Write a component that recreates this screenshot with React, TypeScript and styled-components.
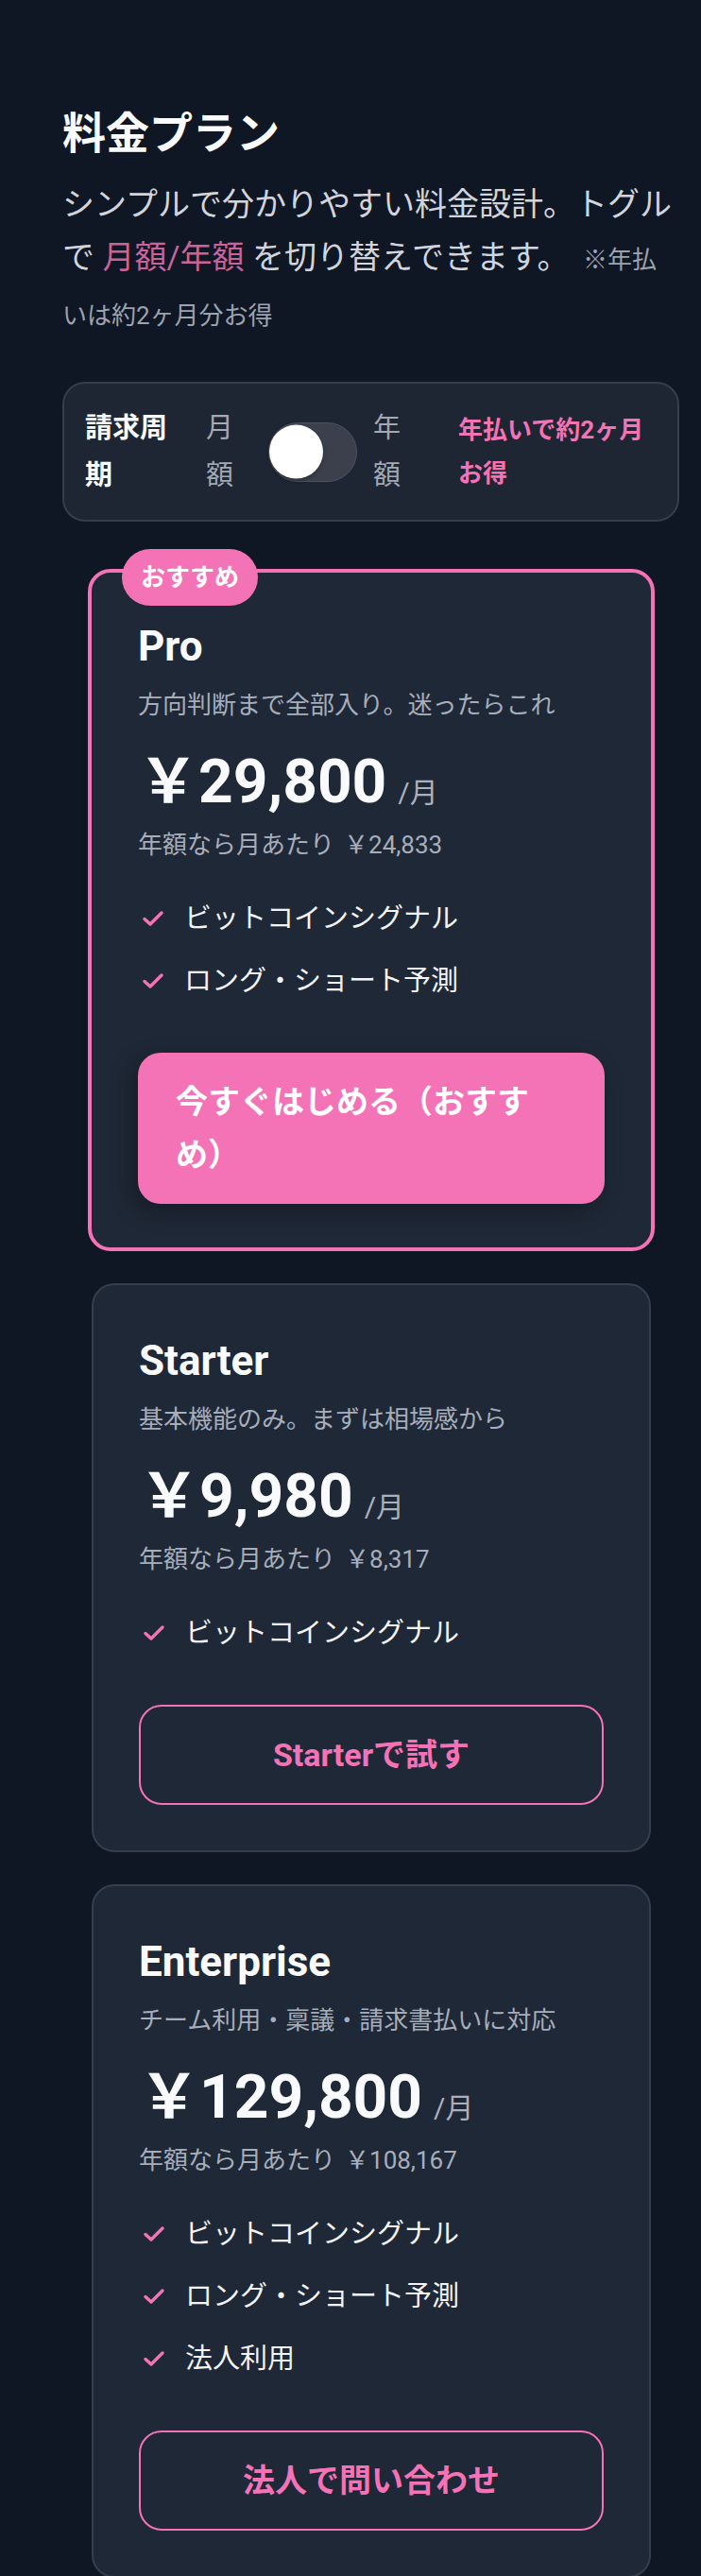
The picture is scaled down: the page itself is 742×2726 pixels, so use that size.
import { useState } from "react";
import styled, { createGlobalStyle } from "styled-components";

const GlobalStyle = createGlobalStyle`
  * {
    box-sizing: border-box;
  }
  html,
  body {
    margin: 0;
    padding: 0;
    background: #0f1624;
  }
  body {
    font-family: Roboto, "Noto Sans CJK JP", "Noto Sans", sans-serif;
    color: #f3f4f6;
  }
`;

const Page = styled.main`
  min-height: 2726px;
  padding: 107px 23px 60px 66px;
  background: #0f1624;
`;

const Title = styled.h1`
  margin: 0;
  font-size: 46px;
  line-height: 68px;
  font-weight: 700;
  color: #f9fafb;
`;

const Lead = styled.p`
  margin: 13px 0 0;
  max-width: 650px;
  font-size: 34px;
  line-height: 56px;
  color: #d1d5db;
`;

const Accent = styled.span`
  color: #c9639c;
`;

const Note = styled.span`
  margin-left: 6px;
  font-size: 26px;
  color: #9ca3af;
`;

const BillingBar = styled.div`
  margin-top: 42px;
  display: grid;
  grid-template-columns: 128px 66px 111px 90px 1fr;
  align-items: center;
  padding: 22px;
  border: 2px solid #353e4d;
  border-radius: 24px;
  background: #1e2634;
`;

const BillingLabel = styled.span`
  max-width: 3.2em;
  font-size: 29px;
  line-height: 50px;
  font-weight: 700;
  color: #f9fafb;
`;

const PeriodText = styled.span`
  max-width: 1.2em;
  font-size: 29px;
  line-height: 50px;
  color: #a3aab6;
`;

const Switch = styled.button`
  position: relative;
  width: 94px;
  height: 63px;
  padding: 0;
  border: 1.5px solid #4b5263;
  border-radius: 999px;
  background: #3b404c;
  cursor: pointer;
`;

const Knob = styled.span<{ $on: boolean }>`
  position: absolute;
  top: 50%;
  left: ${(p) => (p.$on ? "34px" : "0px")};
  width: 57px;
  height: 57px;
  border-radius: 50%;
  background: #ffffff;
  transform: translateY(-50%);
  box-shadow: 0 2px 4px rgba(0, 0, 0, 0.3);
  transition: left 0.2s;
`;

const SaveText = styled.span`
  font-size: 26px;
  line-height: 46px;
  font-weight: 700;
  color: #f472b6;
`;

const Plans = styled.div`
  margin-top: 50px;
  padding: 0 30px 0 31px;
  display: flex;
  flex-direction: column;
  gap: 34px;
`;

const Card = styled.section<{ $featured?: boolean }>`
  position: relative;
  margin: 0 ${(p) => (p.$featured ? "-4px" : "0")};
  padding: ${(p) => (p.$featured ? "46px 49px" : "48px")};
  border: ${(p) => (p.$featured ? "4px solid #f472b6" : "2px solid #353e4d")};
  border-radius: 24px;
  background: #1f2837;
`;

const Badge = styled.span`
  position: absolute;
  top: -25px;
  left: 32px;
  height: 60px;
  padding: 0 20px;
  border-radius: 999px;
  background: #f472b6;
  color: #ffffff;
  font-size: 26px;
  line-height: 60px;
  font-weight: 700;
`;

const PlanName = styled.h2`
  margin: 0;
  font-size: 44px;
  line-height: 64px;
  font-weight: 700;
  color: #f9fafb;
`;

const PlanDesc = styled.p`
  margin: 10px 0 0;
  font-size: 26px;
  line-height: 40px;
  color: #a7aebb;
`;

const PriceRow = styled.div`
  margin-top: 24px;
  display: flex;
  align-items: baseline;
`;

const Amount = styled.span`
  font-size: 64px;
  line-height: 76px;
  font-weight: 700;
  color: #f9fafb;
`;

const Per = styled.span`
  margin-left: 12px;
  font-size: 30px;
  color: #a9b1be;
`;

const Annual = styled.p`
  margin: 8px 0 0;
  font-size: 26px;
  line-height: 40px;
  color: #a7aebb;
`;

const AnnualPrice = styled.span`
  margin-left: 10px;
`;

const Features = styled.ul`
  margin: 35px 0 0;
  padding: 0;
  list-style: none;
  display: flex;
  flex-direction: column;
  gap: 20px;
`;

const Feature = styled.li`
  display: flex;
  align-items: center;
  gap: 21px;
  font-size: 29px;
  line-height: 46px;
  color: #f3f4f6;
`;

const CheckMark = styled.svg`
  flex: none;
  margin-left: 4px;
`;

const ActionButton = styled.button<{ $filled?: boolean }>`
  margin-top: 53px;
  width: 100%;
  display: flex;
  justify-content: center;
  align-items: center;
  text-align: left;
  padding: ${(p) => (p.$filled ? "24px 44px 24px 40px" : "23px 40px")};
  border: ${(p) => (p.$filled ? "none" : "2px solid #f472b6")};
  border-radius: 24px;
  background: ${(p) => (p.$filled ? "#f472b6" : "transparent")};
  color: ${(p) => (p.$filled ? "#ffffff" : "#f472b6")};
  font-family: inherit;
  font-size: 34px;
  line-height: 56px;
  font-weight: 700;
  box-shadow: ${(p) => (p.$filled ? "-6px 8px 24px rgba(0, 0, 0, 0.3)" : "none")};
  cursor: pointer;
`;

interface Plan {
  name: string;
  desc: string;
  monthly: number;
  features: string[];
  cta: string;
  featured?: boolean;
}

const plans: Plan[] = [
  {
    name: "Pro",
    desc: "方向判断まで全部入り。迷ったらこれ",
    monthly: 29800,
    features: ["ビットコインシグナル", "ロング・ショート予測"],
    cta: "今すぐはじめる（おすすめ）",
    featured: true,
  },
  {
    name: "Starter",
    desc: "基本機能のみ。まずは相場感から",
    monthly: 9980,
    features: ["ビットコインシグナル"],
    cta: "Starterで試す",
  },
  {
    name: "Enterprise",
    desc: "チーム利用・稟議・請求書払いに対応",
    monthly: 129800,
    features: ["ビットコインシグナル", "ロング・ショート予測", "法人利用"],
    cta: "法人で問い合わせ",
  },
];

const yen = (n: number) => "￥" + n.toLocaleString("en-US");

// 年額は10ヶ月分 → 月あたり換算
const perMonthYearly = (n: number) => Math.round((n * 10) / 12);

function Check() {
  return (
    <CheckMark width="24" height="18" viewBox="0 0 24 18" aria-hidden>
      <path
        d="M3 9.5l6 5.5L21 3"
        fill="none"
        stroke="#f472b6"
        strokeWidth="3.5"
        strokeLinecap="round"
        strokeLinejoin="round"
      />
    </CheckMark>
  );
}

function PlanCard({ plan, yearly }: { plan: Plan; yearly: boolean }) {
  const price = yearly ? perMonthYearly(plan.monthly) : plan.monthly;
  return (
    <Card $featured={plan.featured}>
      {plan.featured && <Badge>おすすめ</Badge>}
      <PlanName>{plan.name}</PlanName>
      <PlanDesc>{plan.desc}</PlanDesc>
      <PriceRow>
        <Amount>{yen(price)}</Amount>
        <Per>/月</Per>
      </PriceRow>
      <Annual>
        年額なら月あたり
        <AnnualPrice>{yen(perMonthYearly(plan.monthly))}</AnnualPrice>
      </Annual>
      <Features>
        {plan.features.map((f) => (
          <Feature key={f}>
            <Check />
            {f}
          </Feature>
        ))}
      </Features>
      <ActionButton $filled={plan.featured}>
        <span>{plan.cta}</span>
      </ActionButton>
    </Card>
  );
}

export default function App() {
  const [yearly, setYearly] = useState(false);

  return (
    <>
      <GlobalStyle />
      <Page>
        <Title>料金プラン</Title>
        <Lead>
          シンプルで分かりやすい料金設計。トグルで <Accent>月額/年額</Accent>{" "}
          を切り替えできます。 <Note>※年払いは約2ヶ月分お得</Note>
        </Lead>

        <BillingBar>
          <BillingLabel>請求周期</BillingLabel>
          <PeriodText>月額</PeriodText>
          <Switch
            role="switch"
            aria-checked={yearly}
            onClick={() => setYearly(!yearly)}
          >
            <Knob $on={yearly} />
          </Switch>
          <PeriodText>年額</PeriodText>
          <SaveText>年払いで約2ヶ月お得</SaveText>
        </BillingBar>

        <Plans>
          {plans.map((p) => (
            <PlanCard key={p.name} plan={p} yearly={yearly} />
          ))}
        </Plans>
      </Page>
    </>
  );
}
